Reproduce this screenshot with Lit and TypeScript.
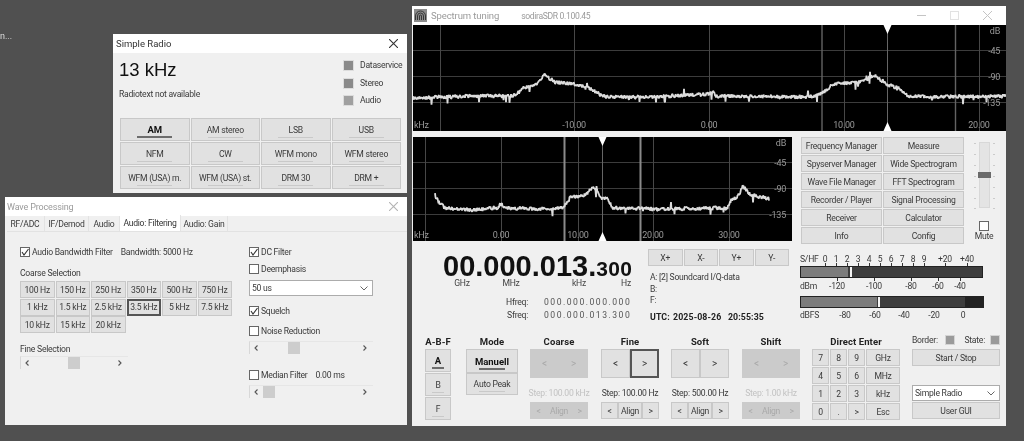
import { LitElement, html, css, svg } from "lit";
import { customElement } from "lit/decorators.js";

type Pt = [number, number];

function envelope(pts: Pt[], x: number): number {
  for (let i = 1; i < pts.length; i++) {
    if (x <= pts[i][0]) {
      const [x0, y0] = pts[i - 1];
      const [x1, y1] = pts[i];
      return y0 + ((y1 - y0) * (x - x0)) / (x1 - x0);
    }
  }
  return pts[pts.length - 1][1];
}

function trace(pts: Pt[], seed: number): string {
  let s = seed;
  const rnd = () => {
    s = (s * 16807) % 2147483647;
    return s / 2147483647;
  };
  const start = pts[0][0];
  const end = pts[pts.length - 1][0];
  let d = "";
  for (let x = start; x <= end; x += 0.5) {
    let y = envelope(pts, x) + (rnd() - 0.5) * 3.8;
    const r = rnd();
    if (r < 0.025) y += 2 + rnd() * 5;
    else if (r < 0.031) y -= 2 + rnd() * 4;
    d += `${d ? "L" : "M"}${x.toFixed(1)} ${y.toFixed(1)}`;
  }
  return d;
}

const C1: Pt[] = [
  [0, 73], [60, 71], [100, 71], [104, 69], [110, 63], [122, 60], [131, 50], [142, 57], [160, 59], [176, 63], [193, 72],
  [240, 72], [296, 69], [300, 66], [303, 71], [400, 72], [408, 69], [421, 59], [445, 57], [452, 55], [461, 50], [475, 60], [486, 63], [495, 71], [520, 72], [594, 71],
];
const C2: Pt[] = [
  [22, 58], [25, 64], [32, 71], [60, 73], [84, 71], [88, 67], [92, 71], [130, 72], [150, 71], [157, 61], [174, 57], [180, 49],
  [189, 61], [194, 61], [200, 71], [240, 72], [314, 71], [319, 62], [324, 61], [330, 49], [337, 57], [356, 62],
];

const btnStyle = css`
  .b {
    position: relative;
    display: flex;
    align-items: center;
    justify-content: center;
    box-sizing: border-box;
    min-width: 0;
    background: #e1e1e1;
    border: 1px solid #c8c8c8;
    color: #3a3a3a;
    white-space: nowrap;
  }
  .b.bold { font-weight: bold; color: #111; font-size: 9.5px; letter-spacing: 0; }
  .b.ind::after {
    content: "";
    position: absolute;
    left: 24%;
    right: 24%;
    bottom: 2px;
    height: 1px;
    background: #c9c9c9;
  }
  .b.ind.on::after { height: 2px; background: #6d6d6d; }
  .b.off { background: #cbcbcb; border-color: #cbcbcb; color: #a9a9a9; }
  .b.focus { border: 2px solid #555; }
`;

@customElement("app-root")
export class AppRoot extends LitElement {
  static styles = [
    btnStyle,
    css`
      :host {
        display: block;
        position: relative;
        width: 1024px;
        height: 441px;
        overflow: hidden;
        background: #505050;
        font-family: Roboto, "Liberation Sans", Arial, sans-serif;
        font-size: 8.6px;
        letter-spacing: -0.25px;
        color: #3a3a3a;
        filter: blur(0.3px);
      }
      .stray { position: absolute; left: 0; top: 31px; color: #ddd; font-size: 9px; letter-spacing: 0; }
      .win {
        position: absolute;
        background: #f0f0f0;
        display: flex;
        flex-direction: column;
        box-sizing: border-box;
      }
      .w-radio { left: 113px; top: 34px; width: 294px; height: 159px; }
      .w-wave { left: 5px; top: 197px; width: 402px; height: 228px; }
      .w-spec { left: 412px; top: 6px; width: 594px; height: 420px; }
      .title {
        flex: none;
        height: 19px;
        background: #fff;
        display: flex;
        align-items: center;
        padding: 0 3px;
        font-size: 9.5px;
        letter-spacing: 0;
        color: #333;
      }
      .title.dim { color: #9a9a9a; }
      .w-wave .title { font-size: 9px; letter-spacing: -0.15px; padding-left: 2px; }
      .title .sp { flex: 1; }
      .x { width: 9px; height: 9px; margin-right: 6px; stroke: #333; stroke-width: 1.1; fill: none; }
      .dim .x { stroke: #b4b4b4; }

      /* simple radio */
      .r-top { display: flex; height: 64px; padding: 6px 4px 0 6px; box-sizing: border-box; }
      .r-left { flex: 1; }
      .r-freq { font-family: "Liberation Sans", Arial, sans-serif; font-size: 18.5px; letter-spacing: 0; line-height: 22px; color: #111; }
      .r-text { margin-top: 7px; line-height: 12px; }
      .r-leds { width: 60px; display: flex; flex-direction: column; gap: 6px; padding-top: 1px; }
      .led-row { display: flex; align-items: center; gap: 6px; height: 11.5px; line-height: 11px; }
      .led { flex: none; width: 11px; height: 11px; background: #8a8a8a; border: 1px solid #dcdcdc; box-sizing: border-box; }
      .led.l { background: #a0a0a0; }
      .r-grid {
        margin: 1px 6px 0 7px;
        display: grid;
        grid-template-columns: repeat(4, 69.5px);
        grid-auto-rows: 23px;
        gap: 1px;
      }

      /* wave */
      .tabs { flex: none; height: 15px; display: flex; padding-left: 1px; background: #f0f0f0; }
      .tab { display: flex; align-items: center; justify-content: center; background: #f0f0f0; border-right: 1px solid #e3e3e3; box-sizing: border-box; white-space: nowrap; }
      .tab.on { background: #fff; color: #333; margin-top: -1px; }
      .panel {
        flex: 1;
        margin: 0 0 1px 2px;
        border-top: 1px solid #e2e2e2;
        display: flex;
        padding: 14px 0 0 13px;
      }
      .p-left { width: 229px; display: flex; flex-direction: column; }
      .p-right { width: 125px; display: flex; flex-direction: column; }
      .ck { display: flex; align-items: center; gap: 2px; height: 11px; white-space: nowrap; }
      .box { width: 10px; height: 10px; border: 1px solid #666; background: #fff; box-sizing: border-box; flex: none; }
      .box svg { display: block; width: 8px; height: 8px; fill: none; stroke: #333; stroke-width: 1.1; }
      .ml { margin-left: 6px; }
      .cs { margin-top: 10px; line-height: 13px; }
      .c-grid {
        margin-top: 1px;
        display: grid;
        grid-template-columns: repeat(6, 34.5px);
        grid-auto-rows: 17px;
        column-gap: 1px;
        row-gap: 0.5px;
      }
      .fs { margin-top: 10px; line-height: 13px; }
      .scroll {
        height: 13px;
        background: #f0f0f0;
        border-left: 1px solid #d8d8d8;
        border-top: 1px solid #e6e6e6;
        box-sizing: border-box;
        display: flex;
        align-items: center;
        justify-content: space-between;
        padding: 0 6px 0 4px;
        position: relative;
      }
      .scroll svg { width: 4px; height: 6px; fill: none; stroke: #555; stroke-width: 1.1; }
      .thumb { position: absolute; top: 0; bottom: 0; width: 12px; background: #cdcdcd; }
      .sb1 { width: 108px; }
      .sb2 { width: 124px; }
      .g5 { height: 5px; } .g6 { height: 6px; } .g9 { height: 9px; } .g15 { height: 15px; }
      .select {
        height: 16px;
        width: 124px;
        background: #fff;
        border: 1px solid #acacac;
        box-sizing: border-box;
        display: flex;
        align-items: center;
        justify-content: space-between;
        padding: 0 4px 0 2px;
      }
      .select svg { width: 8px; height: 5px; fill: none; stroke: #666; stroke-width: 1; }

      /* spectrum */
      .t-icon { width: 13px; height: 13px; margin-left: -1px; margin-right: 4px; }
      .spec-title { font-size: 9.5px; letter-spacing: -0.1px; }
      .ver { margin-left: 22px; font-size: 8.6px; letter-spacing: -0.35px; }
      .wbtn { width: 9px; height: 9px; margin-left: 24px; stroke: #c4c4c4; fill: none; stroke-width: 1; }
      .s1 { flex: none; display: block; margin-left: 1px; }
      .row2 { flex: none; height: 106px; margin-top: 6px; display: flex; align-items: flex-start; }
      .s2 { flex: none; display: block; margin-left: 1px; }
      .f-grid {
        margin-left: 9px;
        display: grid;
        grid-template-columns: repeat(2, 81px);
        grid-auto-rows: 17px;
        gap: 1px;
      }
      .vol { width: 40px; display: flex; flex-direction: column; align-items: center; padding-top: 5px; }
      .track {
        position: relative;
        width: 11px;
        height: 66px;
        background: #e4e4e4;
        border: 1px solid #d8d8d8;
        box-sizing: border-box;
      }
      .knob { position: absolute; left: -2px; top: 29px; width: 13px; height: 6px; background: #6a6a6a; }
      .tick { position: absolute; width: 2px; height: 1px; background: #cbcbcb; }
      .m-box { margin-top: 13px; width: 10px; height: 10px; border: 1px solid #666; background: #fff; box-sizing: border-box; }
      .m-lab { line-height: 12px; margin-top: -1px; }

      .row3 { flex: none; height: 90px; display: flex; }
      .fcol { width: 236px; flex: none; padding-top: 9px; box-sizing: border-box; }
      .bigline { display: flex; align-items: baseline; margin-left: 31px; font-family: "Liberation Sans", Arial, sans-serif; font-weight: bold; color: #111; line-height: 28px; letter-spacing: 0; }
      .big { font-size: 29px; }
      .small { font-size: 21px; letter-spacing: 0.4px; }
      .units { display: grid; grid-template-columns: 38px 60px 76px 18px; margin: -5px 0 0 31px; line-height: 10px; text-align: center; color: #444; }
      .fr { display: grid; grid-template-columns: 116px 87px; column-gap: 16px; line-height: 13px; }
      .fr .lab { text-align: right; }
      .fr .val { letter-spacing: 1.5px; white-space: nowrap; color: #555; }
      .fr.first { margin-top: 7.5px; }
      .midc { width: 152px; flex: none; padding-top: 6px; box-sizing: border-box; }
      .xy { display: grid; grid-template-columns: repeat(4, 34.5px); height: 17px; column-gap: 1px; }
      .info { margin-top: 6px; padding-left: 2px; line-height: 11.7px; }
      .utc { margin-top: 5px; padding-left: 2px; font-weight: bold; font-size: 8.8px; letter-spacing: 0.1px; color: #222; word-spacing: 1px; white-space: pre; }
      .meters { flex: none; width: 192px; padding-top: 10px; box-sizing: border-box; }
      .scale { position: relative; height: 13px; line-height: 13px; }
      .scale span { position: absolute; top: 0; transform: translateX(-50%); white-space: nowrap; }
      .scale span.left { transform: none; }
      .bar { position: relative; height: 12px; background: #3d3d3d; border: 1px solid #222; box-sizing: border-box; display: flex; }
      .bar i { display: block; height: 100%; }
      .marker { position: absolute; top: 0; bottom: 0; width: 2px; background: #f4f4f4; }
      .tk { position: absolute; width: 1px; height: 3px; background: #333; }

      .row4 { flex: 1; display: flex; padding-left: 13px; padding-top: 1px; min-height: 0; }
      .h { font-weight: bold; text-align: center; height: 15px; line-height: 15px; color: #222; letter-spacing: 0.1px; white-space: nowrap; font-size: 9.5px; }
      .abf { width: 26px; display: flex; flex-direction: column; align-items: stretch; }
      .abf .h, .modec .h { margin: 0 -10px; }
      .abf-b { display: grid; grid-auto-rows: 23px; row-gap: 1px; }
      .modec { width: 52px; margin-left: 15px; }
      .mode-b { display: grid; grid-template-rows: 24px 22px; }
      .tune { width: 58px; }
      .pair { display: grid; grid-template-columns: 1fr 1fr; height: 29px; }
      .pair .b { font-size: 10px; }
      .step { text-align: center; margin: 0 -6px; height: 24px; line-height: 30px; white-space: nowrap; }
      .step.dis { color: #c2c2c2; }
      .tri { display: grid; grid-template-columns: 17px 1fr 17px; height: 17px; }
      .dir { margin-left: 12px; width: 88px; }
      .d-grid { display: grid; grid-template-columns: 17px 17px 17px 34px; grid-auto-rows: 17px; gap: 1px; }
      .rcol { margin-left: 12px; width: 88px; margin-top: -3px; display: flex; flex-direction: column; }
      .st { height: 18px; display: flex; align-items: center; justify-content: space-between; }
      .sw { width: 10px; height: 10px; background: #9a9a9a; border: 1px solid #d4d4d4; box-sizing: border-box; flex: none; }
      .st div { display: flex; align-items: center; }
      .st .bd { gap: 7px; }
      .st .sta { gap: 5px; }
      .rcol .b { height: 17px; }
      .rcol .select { width: 88px; margin-top: 19px; }
      .ug { margin-top: 1px; }
    `,
  ];

  private xIcon() {
    return html`<svg class="x" viewBox="0 0 9 9"><path d="M0 0L9 9M9 0L0 9" /></svg>`;
  }
  private box(on: boolean) {
    return html`<span class="box">${on ? html`<svg viewBox="0 0 8 8"><path d="M1 4L3 7L7.5 1" /></svg>` : ""}</span>`;
  }
  private ck(label: string, on: boolean) {
    return html`<div class="ck">${this.box(on)}<span>${label}</span></div>`;
  }
  private scroll(cls: string, thumb: number) {
    return html`<div class="scroll ${cls}">
      <svg viewBox="0 0 4 6"><path d="M3.5 0.5L1 3L3.5 5.5" /></svg>
      <div class="thumb" style="left:${thumb}px"></div>
      <svg viewBox="0 0 4 6"><path d="M0.5 0.5L3 3L0.5 5.5" /></svg>
    </div>`;
  }
  private chevron() {
    return html`<svg viewBox="0 0 8 5"><path d="M0.5 0.5L4 4L7.5 0.5" /></svg>`;
  }

  private spectrum(
    w: number,
    h: number,
    hl: number[],
    thin: number[],
    thick: number[],
    thickColor: string,
    thickW: number,
    center: number,
    labels: [string, number][],
    pts: Pt[],
    seed: number,
  ) {
    const dbs: [string, number][] = [["dB", 9], ["-45", hl[0] + 4], ["-90", hl[1] + 4], ["-135", hl[2] + 4]];
    return svg`
      <rect width=${w} height=${h} fill="#000"></rect>
      ${hl.map((y) => svg`<line x1="0" x2=${w} y1=${y + 0.5} y2=${y + 0.5} stroke="#3c3c3c"></line>`)}
      ${thin.map((x) => svg`<line y1="0" y2=${h} x1=${x + 0.5} x2=${x + 0.5} stroke="#474747"></line>`)}
      ${thick.map((x) => svg`<line y1="0" y2=${h} x1=${x + 0.5} x2=${x + 0.5} stroke=${thickColor} stroke-width=${thickW}></line>`)}
      <line y1="0" y2=${h} x1=${center} x2=${center} stroke="#666"></line>
      <path d=${trace(pts, seed)} fill="none" stroke="#dcdcdc" stroke-width="1.8" stroke-linejoin="bevel"></path>
      <path d="M${center - 4} 0H${center + 4}L${center} 9Z" fill="#fff"></path>
      <path d="M${center - 4} ${h}H${center + 4}L${center} ${h - 9}Z" fill="#fff"></path>
      <g font-family="Roboto, Liberation Sans, Arial, sans-serif" font-size="9" fill="#9a9a9a">
        <text x="1" y=${h - 3}>kHz</text>
        ${labels.map(([t, x]) => svg`<text x=${x} y=${h - 3} text-anchor="middle">${t}</text>`)}
        ${dbs.map(([t, y]) => svg`<text x=${w - 6} y=${y} text-anchor="end">${t}</text>`)}
      </g>`;
  }

  private tune(name: string, step: string, dis: boolean, focusRight: boolean, ml: number) {
    const o = dis ? "off" : "";
    return html`<div class="tune" style="margin-left:${ml}px">
      <div class="h">${name}</div>
      <div class="pair">
        <div class="b ${o}">&lt;</div>
        <div class="b ${o} ${focusRight ? "focus" : ""}">&gt;</div>
      </div>
      <div class="step ${dis ? "dis" : ""}">${step}</div>
      <div class="tri">
        <div class="b ${o}">&lt;</div>
        <div class="b ${o}">Align</div>
        <div class="b ${o}">&gt;</div>
      </div>
    </div>`;
  }

  render() {
    const modes = ["AM", "AM stereo", "LSB", "USB", "NFM", "CW", "WFM mono", "WFM stereo", "WFM (USA) m.", "WFM (USA) st.", "DRM 30", "DRM +"];
    const coarse = ["100 Hz", "150 Hz", "250 Hz", "350 Hz", "500 Hz", "750 Hz", "1 kHz", "1.5 kHz", "2.5 kHz", "3.5 kHz", "5 kHz", "7.5 kHz", "10 kHz", "15 kHz", "20 kHz"];
    const tabs: [string, number][] = [["RF/ADC", 39], ["IF/Demod", 44], ["Audio", 31], ["Audio: Filtering", 61], ["Audio: Gain", 47]];
    const funcs = ["Frequency Manager", "Measure", "Spyserver Manager", "Wide Spectrogram", "Wave File Manager", "FFT Spectrogram", "Recorder / Player", "Signal Processing", "Receiver", "Calculator", "Info", "Config"];
    const keys = ["7", "8", "9", "GHz", "4", "5", "6", "MHz", "1", "2", "3", "kHz", "0", ".", ">", "Esc"];
    const sTop: [string, number][] = [["0", 25], ["1", 36], ["2", 47], ["3", 58], ["4", 69], ["5", 80], ["6", 91], ["7", 102], ["8", 113], ["9", 124], ["+20", 145], ["+40", 167]];
    const sBot: [string, number][] = [["-120", 37], ["-100", 74], ["-80", 111], ["-60", 138], ["-40", 160]];
    const sFs: [string, number][] = [["-80", 45], ["-60", 75], ["-40", 104], ["-20", 134], ["0", 163]];
    const volTicks = [0, 11, 22, 33, 44, 55, 65];

    return html`
      <div class="stray">n...</div>

      <section class="win w-radio">
        <div class="title"><span>Simple Radio</span><span class="sp"></span>${this.xIcon()}</div>
        <div class="r-top">
          <div class="r-left">
            <div class="r-freq">13 kHz</div>
            <div class="r-text">Radiotext not available</div>
          </div>
          <div class="r-leds">
            <div class="led-row"><span class="led"></span>Dataservice</div>
            <div class="led-row"><span class="led"></span>Stereo</div>
            <div class="led-row"><span class="led l"></span>Audio</div>
          </div>
        </div>
        <div class="r-grid">
          ${modes.map((m, i) => html`<div class="b ind ${i === 0 ? "on bold" : ""}">${m}</div>`)}
        </div>
      </section>

      <section class="win w-wave">
        <div class="title dim"><span>Wave Processing</span><span class="sp"></span>${this.xIcon()}</div>
        <div class="tabs">
          ${tabs.map(([t, w], i) => html`<div class="tab ${i === 3 ? "on" : ""}" style="width:${w}px">${t}</div>`)}
        </div>
        <div class="panel">
          <div class="p-left">
            <div class="ck">${this.box(true)}<span>Audio Bandwidth Filter</span><span class="ml">Bandwidth: 5000 Hz</span></div>
            <div class="cs">Coarse Selection</div>
            <div class="c-grid">
              ${coarse.map((c, i) => html`<div class="b ${i === 9 ? "focus" : ""}">${c}</div>`)}
            </div>
            <div class="fs">Fine Selection</div>
            ${this.scroll("sb1", 47)}
          </div>
          <div class="p-right">
            ${this.ck("DC Filter", true)}
            <div class="g6"></div>
            ${this.ck("Deemphasis", false)}
            <div class="g6"></div>
            <div class="select"><span>50 us</span>${this.chevron()}</div>
            <div class="g9"></div>
            ${this.ck("Squelch", true)}
            <div class="g9"></div>
            ${this.ck("Noise Reduction", false)}
            <div class="g5"></div>
            ${this.scroll("sb2", 38)}
            <div class="g15"></div>
            <div class="ck">${this.box(false)}<span>Median Filter</span><span class="ml">0.00 ms</span></div>
            <div class="g5"></div>
            ${this.scroll("sb2", 13)}
          </div>
        </div>
      </section>

      <section class="win w-spec">
        <div class="title dim">
          <svg class="t-icon" viewBox="0 0 13 13">
            <rect width="13" height="13" fill="#8c8c8c"></rect>
            <path d="M1.5 11V7a5 5 0 0 1 10 0V11M3.5 11V7a3 3 0 0 1 6 0V11M5.5 11V7a1 1 0 0 1 2 0V11" fill="none" stroke="#2e2e2e" stroke-width="0.9"></path>
          </svg>
          <span class="spec-title">Spectrum tuning</span>
          <span class="ver">sodiraSDR 0.100.45</span>
          <span class="sp"></span>
          <svg class="wbtn" viewBox="0 0 9 9"><path d="M0 4.5H9" /></svg>
          <svg class="wbtn" viewBox="0 0 9 9" style="stroke:#e2e2e2"><rect x="0.5" y="0.5" width="8" height="8" /></svg>
          <svg class="wbtn" viewBox="0 0 9 9" style="margin-right:11px"><path d="M0 0L9 9M9 0L0 9" /></svg>
        </div>
        <svg class="s1" width="593" height="106" viewBox="0 0 593 106">
          ${this.spectrum(593, 106, [25, 51, 77], [27, 161, 296, 431, 566], [408.5, 542], "#636363", 1.4, 474.5, [["-10.00", 161], ["0.00", 296], ["10.00", 431], ["20.00", 566]], C1, 4711)}
        </svg>
        <div class="row2">
          <svg class="s2" width="379" height="104" viewBox="0 0 379 104">
            ${this.spectrum(379, 104, [25, 51, 77], [12, 88, 165, 240, 316], [151, 227], "#8a8a8a", 2, 189.5, [["0.00", 88], ["10.00", 165], ["20.00", 240], ["30.00", 316]], C2, 991)}
          </svg>
          <div class="f-grid">${funcs.map((f) => html`<div class="b">${f}</div>`)}</div>
          <div class="vol">
            <div class="track">
              ${volTicks.map((t) => html`<span class="tick" style="left:-6px;top:${t}px"></span><span class="tick" style="left:13px;top:${t}px"></span>`)}
              <div class="knob"></div>
            </div>
            <div class="m-box"></div>
            <div class="m-lab">Mute</div>
          </div>
        </div>
        <div class="row3">
          <div class="fcol">
            <div class="bigline"><span class="big">00.000.013.</span><span class="small">300</span></div>
            <div class="units"><span>GHz</span><span>MHz</span><span>kHz</span><span>Hz</span></div>
            <div class="fr first"><span class="lab">Hfreq:</span><span class="val">000.000.000.000</span></div>
            <div class="fr"><span class="lab">Sfreq:</span><span class="val">000.000.013.300</span></div>
          </div>
          <div class="midc">
            <div class="xy">${["X+", "X-", "Y+", "Y-"].map((t) => html`<div class="b">${t}</div>`)}</div>
            <div class="info">A: [2] Soundcard I/Q-data<br />B:<br />F:</div>
            <div class="utc">UTC: 2025-08-26  20:55:35</div>
          </div>
          <div class="meters">
            <div class="scale">
              <span class="left" style="left:0">S/HF</span>
              ${sTop.map(([t, x]) => html`<span style="left:${x}px">${t}</span>`)}
            </div>
            <div class="bar" style="width:183px">
              <i style="width:47px;background:#7c7c7c"></i>
              <div class="marker" style="left:49px"></div>
            </div>
            <div class="scale">
              <span class="left" style="left:0;top:2px">dBm</span>
              ${sBot.map(([t, x]) => html`<span style="left:${x}px;top:2px">${t}</span>`)}
              ${sTop.map(([, x]) => html`<i class="tk" style="left:${x}px;top:-15px"></i>`)}
              ${sBot.map(([, x]) => html`<i class="tk" style="left:${x}px;top:0"></i>`)}
            </div>
            <div class="bar" style="width:184px;margin-top:5px">
              <i style="width:76px;background:#7c7c7c"></i>
              <i style="width:85px;margin-left:3px;background:#3d3d3d"></i>
              <i style="flex:1;background:#222"></i>
              <div class="marker" style="left:77px"></div>
            </div>
            <div class="scale" style="margin-top:1px">
              <span class="left" style="left:0">dBFS</span>
              ${sFs.map(([t, x]) => html`<span style="left:${x}px">${t}</span>`)}
            </div>
          </div>
        </div>
        <div class="row4">
          <div class="abf">
            <div class="h">A-B-F</div>
            <div class="abf-b">
              <div class="b ind on bold">A</div>
              <div class="b ind">B</div>
              <div class="b ind">F</div>
            </div>
          </div>
          <div class="modec">
            <div class="h">Mode</div>
            <div class="mode-b">
              <div class="b ind on bold">Manuell</div>
              <div class="b ind">Auto Peak</div>
            </div>
          </div>
          ${this.tune("Coarse", "Step: 100.00 kHz", true, false, 12)}
          ${this.tune("Fine", "Step: 100.00 Hz", false, true, 13)}
          ${this.tune("Soft", "Step: 500.00 Hz", false, false, 12)}
          ${this.tune("Shift", "Step: 1.00 kHz", true, false, 13)}
          <div class="dir">
            <div class="h">Direct Enter</div>
            <div class="d-grid">${keys.map((k) => html`<div class="b">${k}</div>`)}</div>
          </div>
          <div class="rcol">
            <div class="st">
              <div class="bd">Border: <span class="sw"></span></div>
              <div class="sta">State: <span class="sw"></span></div>
            </div>
            <div class="b">Start / Stop</div>
            <div class="select"><span>Simple Radio</span>${this.chevron()}</div>
            <div class="b ug">User GUI</div>
          </div>
        </div>
      </section>
    `;
  }
}
